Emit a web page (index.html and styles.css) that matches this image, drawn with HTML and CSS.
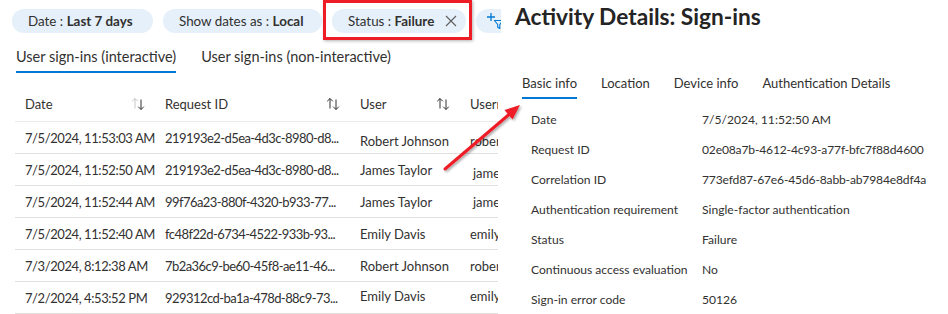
FILE: index.html
```html
<!DOCTYPE html>
<html lang="en">
<head>
<meta charset="utf-8">
<title>Sign-ins</title>
<link rel="stylesheet" href="styles.css">
</head>
<body>
<div class="page">
  <section class="signins">
    <div class="filters">
      <span class="pill pill-date">Date :&nbsp;<b>Last 7 days</b></span>
      <span class="pill pill-local">Show dates as :&nbsp;<b>Local</b></span>
      <span class="pill pill-status">Status :&nbsp;<b>Failure</b>
        <svg class="close" width="12" height="12" viewBox="0 0 12 12"><path d="M1 1L11 11M11 1L1 11" stroke="#605e5c" stroke-width="1.1" fill="none"/></svg>
      </span>
      <span class="pill pill-add">
        <svg width="18" height="18" viewBox="0 0 18 18"><path d="M5 1V9M1 5H9" stroke="#0078d4" stroke-width="1.3" fill="none"/><path d="M8.5 8.5H17L13.8 12.5V16.5L11.7 15.2V12.5Z" stroke="#0078d4" stroke-width="1.1" fill="none" stroke-linejoin="round"/></svg>
      </span>
    </div>
    <div class="tabs">
      <span class="tab active">User sign-ins (interactive)</span>
      <span class="tab">User sign-ins (non-interactive)</span>
    </div>
    <div class="table">
      <div class="row head">
        <div class="cell th">Date <svg class="sort" width="14" height="14" viewBox="0 0 14 14"><path d="M4 1.5V11.5M1.2 4.3L4 1.5L6.8 4.3" stroke="#c8c6c4" fill="none"/><path d="M10 2.5V12.5M7.2 9.7L10 12.5L12.8 9.7" stroke="#323130" fill="none"/></svg></div>
        <div class="cell th">Request ID <svg class="sort" width="14" height="14" viewBox="0 0 14 14"><path d="M4 1.5V11.5M1.2 4.3L4 1.5L6.8 4.3" stroke="#323130" fill="none"/><path d="M10 2.5V12.5M7.2 9.7L10 12.5L12.8 9.7" stroke="#323130" fill="none"/></svg></div>
        <div class="cell th">User <svg class="sort" width="14" height="14" viewBox="0 0 14 14"><path d="M4 1.5V11.5M1.2 4.3L4 1.5L6.8 4.3" stroke="#323130" fill="none"/><path d="M10 2.5V12.5M7.2 9.7L10 12.5L12.8 9.7" stroke="#323130" fill="none"/></svg></div>
        <div class="cell th">Username</div>
      </div>
      <div class="row">
        <div class="cell num">7/5/2024, 11:53:03 AM</div>
        <div class="cell rid">219193e2-d5ea-4d3c-8980-d8...</div>
        <div class="cell user low">Robert Johnson</div>
        <div class="cell uname low">robert.johnson</div>
      </div>
      <div class="row">
        <div class="cell num">7/5/2024, 11:52:50 AM</div>
        <div class="cell rid">219193e2-d5ea-4d3c-8980-d8...</div>
        <div class="cell user">James Taylor</div>
        <div class="cell uname low shift">james.taylor</div>
      </div>
      <div class="row">
        <div class="cell num">7/5/2024, 11:52:44 AM</div>
        <div class="cell rid">99f76a23-880f-4320-b933-77...</div>
        <div class="cell user">James Taylor</div>
        <div class="cell uname shift">james.taylor</div>
      </div>
      <div class="row">
        <div class="cell num">7/5/2024, 11:52:40 AM</div>
        <div class="cell rid">fc48f22d-6734-4522-933b-93...</div>
        <div class="cell user">Emily Davis</div>
        <div class="cell uname">emily.davis</div>
      </div>
      <div class="row">
        <div class="cell num">7/3/2024, 8:12:38 AM</div>
        <div class="cell rid">7b2a36c9-be60-45f8-ae11-46...</div>
        <div class="cell user">Robert Johnson</div>
        <div class="cell uname">robert.johnson</div>
      </div>
      <div class="row">
        <div class="cell num">7/2/2024, 4:53:52 PM</div>
        <div class="cell rid">929312cd-ba1a-478d-88c9-73...</div>
        <div class="cell user high">Emily Davis</div>
        <div class="cell uname high">emily.davis</div>
      </div>
    </div>
  </section>

  <section class="details">
    <h1>Activity Details: Sign-ins</h1>
    <div class="dtabs">
      <span class="dtab active">Basic info</span>
      <span class="dtab">Location</span>
      <span class="dtab">Device info</span>
      <span class="dtab">Authentication Details</span>
    </div>
    <dl class="props">
      <dt>Date</dt><dd>7/5/2024, 11:52:50 AM</dd>
      <dt>Request ID</dt><dd class="guid">02e08a7b-4612-4c93-a77f-bfc7f88d4600</dd>
      <dt>Correlation ID</dt><dd class="guid">773efd87-67e6-45d6-8abb-ab7984e8df4a</dd>
      <dt>Authentication requirement</dt><dd>Single-factor authentication</dd>
      <dt>Status</dt><dd>Failure</dd>
      <dt>Continuous access evaluation</dt><dd>No</dd>
      <dt>Sign-in error code</dt><dd>50126</dd>
    </dl>
  </section>
</div>

<div class="highlight"></div>
<svg class="arrow" width="948" height="314" viewBox="0 0 948 314">
  <defs>
    <filter id="sh" x="-20%" y="-20%" width="140%" height="140%">
      <feDropShadow dx="1.5" dy="1.5" stdDeviation="1.2" flood-color="#000" flood-opacity="0.35"/>
    </filter>
  </defs>
  <g filter="url(#sh)">
    <line x1="445" y1="169" x2="509" y2="114.5" stroke="#ee1c25" stroke-width="3" stroke-linecap="round"/>
    <polygon points="520,105 512.5,119.5 504.5,110" fill="#ee1c25"/>
  </g>
</svg>
</body>
</html>
```

FILE: styles.css
```css
* {
  box-sizing: border-box;
  margin: 0;
  padding: 0;
}

body {
  width: 948px;
  height: 314px;
  overflow: hidden;
  position: relative;
  background: #fff;
  color: #323130;
  font-family: Lato, "Liberation Sans", sans-serif;
  font-size: 13px;
}

.page {
  display: flex;
  height: 314px;
}

/* ---------- left: sign-ins list ---------- */
.signins {
  width: 501px;
  flex: none;
  overflow: hidden;
}

.filters {
  display: flex;
  gap: 10px;
  margin: 9px 0 0 12px;
}

.pill {
  flex: none;
  display: flex;
  align-items: center;
  height: 24px;
  padding-left: 16px;
  border-radius: 12px;
  background: #e5f0fa;
  font-size: 13.4px;
  white-space: nowrap;
}

.pill b {
  font-weight: 700;
}

.pill-date { width: 141px; }
.pill-local { width: 159px; }
.pill-status { width: 134px; }
.pill-add { width: 44px; padding-left: 10px; }

.pill-status .close {
  margin-left: auto;
  margin-right: 9px;
}

.tabs {
  display: flex;
  gap: 25px;
  margin: 14px 0 0 16px;
  font-size: 14.5px;
}

.tab {
  line-height: 20px;
  padding-bottom: 4px;
  border-bottom: 2px solid transparent;
  white-space: nowrap;
}

.tab.active {
  border-bottom-color: #0078d4;
}

.table {
  width: 483px;
  margin: 14px 0 0 15px;
}

.row {
  display: grid;
  grid-template-columns: 140px 195px 110px 38px;
  align-items: center;
  height: 32px;
  border-bottom: 1px solid #e1dfdd;
}

.row.head {
  height: 35px;
  border-bottom-color: #edebe9;
}

.cell {
  padding-left: 10px;
  white-space: nowrap;
  overflow: hidden;
}

.num {
  letter-spacing: -0.42px;
}

.rid {
  letter-spacing: -0.56px;
}

.th {
  display: flex;
  align-items: center;
  justify-content: space-between;
  padding-right: 10px;
}

.low { padding-top: 6px; }
.high { padding-bottom: 4px; }
.shift { padding-left: 13px; }

/* ---------- right: details panel ---------- */
.details {
  flex: 1;
  padding-left: 14px;
  background: #fff;
}

.details h1 {
  font-size: 22.7px;
  font-weight: 700;
  line-height: 30px;
  padding-top: 2px;
  color: #242424;
  white-space: nowrap;
}

.dtabs {
  display: flex;
  gap: 24px;
  margin: 41px 0 0 7px;
}

.dtab {
  line-height: 20px;
  padding-bottom: 4px;
  border-bottom: 2px solid transparent;
  white-space: nowrap;
}

.dtab.active {
  border-bottom-color: #0078d4;
}

.props {
  display: grid;
  grid-template-columns: 171px 1fr;
  grid-auto-rows: 30px;
  align-items: center;
  margin: 5px 0 0 16px;
  font-size: 12.1px;
}

.props dt,
.props dd {
  white-space: nowrap;
}

.props .guid {
  letter-spacing: -0.17px;
}

/* ---------- annotations ---------- */
.highlight {
  position: absolute;
  left: 323px;
  top: 0;
  width: 149px;
  height: 40px;
  border: 3px solid #ee1c25;
  box-shadow: 1px 1px 3px rgba(0, 0, 0, 0.3);
}

.arrow {
  position: absolute;
  left: 0;
  top: 0;
  pointer-events: none;
}
```
